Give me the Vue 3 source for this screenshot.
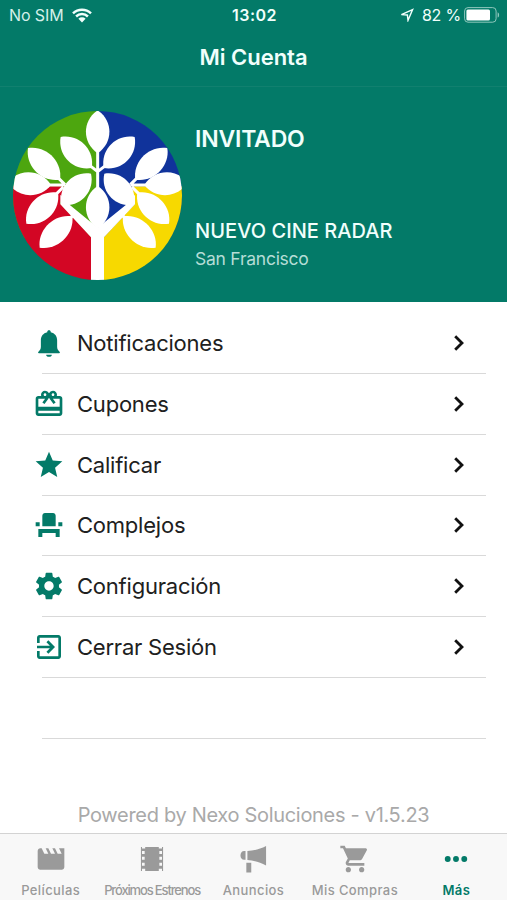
<script setup>
const menuItems = [
  { label: 'Notificaciones', icon: 'bell' },
  { label: 'Cupones', icon: 'gift' },
  { label: 'Calificar', icon: 'star' },
  { label: 'Complejos', icon: 'seat' },
  { label: 'Configuración', icon: 'gear' },
  { label: 'Cerrar Sesión', icon: 'exit' }
]

const icons = {
  bell: 'M9.9 20.9h4.2a2.1 1.5 0 0 1-4.2 0zM12 2.4c-.8 0-1.3.5-1.3 1.2v.3C7.6 4.6 5.9 6.9 5.9 10v4.9c0 1.7-.6 2.6-1.8 3.7-.5.5-.3 1.1.3 1.1h15.2c.6 0 .8-.6.3-1.1-1.2-1.1-1.8-2-1.8-3.7V10c0-3.1-1.7-5.4-4.8-6.1v-.3c0-.7-.5-1.2-1.3-1.2z',
  gift: 'M20 6h-2.18c.11-.31.18-.65.18-1 0-1.66-1.34-3-3-3-1.05 0-1.96.54-2.5 1.35l-.5.67-.5-.68C10.96 2.54 10.05 2 9 2 7.34 2 6 3.34 6 5c0 .35.07.69.18 1H4c-1.11 0-1.99.89-1.99 2L2 19c0 1.11.89 2 2 2h16c1.11 0 2-.89 2-2V8c0-1.11-.89-2-2-2zm-5-2c.55 0 1 .45 1 1s-.45 1-1 1-1-.45-1-1 .45-1 1-1zM9 4c.55 0 1 .45 1 1s-.45 1-1 1-1-.45-1-1 .45-1 1-1zm11 15H4v-2h16v2zm0-5H4V8h5.08L7 10.83 8.62 12 11 8.76l1-1.36 1 1.36L15.38 12 17 10.83 14.92 8H20v6z',
  star: 'M12 17.27 18.18 21l-1.64-7.03L22 9.24l-7.19-.61L12 2 9.19 8.63 2 9.24l5.46 4.73L5.82 21z',
  seat: 'M4 18v3h3v-3h10v3h3v-6H4zm15-8h3v3h-3zM2 10h3v3H2zm15 3H7V5c0-1.1.9-2 2-2h6c1.1 0 2 .9 2 2v8z',
  gear: 'M19.43 12.98c.04-.32.07-.64.07-.98s-.03-.66-.07-.98l2.11-1.65c.19-.15.24-.42.12-.64l-2-3.46c-.12-.22-.39-.3-.61-.22l-2.49 1c-.52-.4-1.08-.73-1.69-.98l-.38-2.65C14.46 2.18 14.25 2 14 2h-4c-.25 0-.46.18-.49.42l-.38 2.65c-.61.25-1.17.59-1.69.98l-2.49-1c-.23-.09-.49 0-.61.22l-2 3.46c-.13.22-.07.49.12.64l2.11 1.65c-.04.32-.07.65-.07.98s.03.66.07.98l-2.11 1.65c-.19.15-.24.42-.12.64l2 3.46c.12.22.39.3.61.22l2.49-1c.52.4 1.08.73 1.69.98l.38 2.65c.03.24.24.42.49.42h4c.25 0 .46-.18.49-.42l.38-2.65c.61-.25 1.17-.59 1.69-.98l2.49 1c.23.09.49 0 .61-.22l2-3.46c.12-.22.07-.49-.12-.64l-2.11-1.65zM12 15.5c-1.93 0-3.5-1.57-3.5-3.5s1.57-3.5 3.5-3.5 3.5 1.57 3.5 3.5-1.57 3.5-3.5 3.5z',
  exit: 'M10.09 15.59 11.5 17l5-5-5-5-1.41 1.41L12.67 11H3v2h9.67l-2.58 2.59zM19 3H5c-1.11 0-2 .9-2 2v4h2V5h14v14H5v-4H3v4c0 1.1.89 2 2 2h14c1.1 0 2-.9 2-2V5c0-1.1-.9-2-2-2z',
  movie: 'M18 4l2 4h-3l-2-4h-2l2 4h-3l-2-4H8l2 4H7L5 4H4c-1.1 0-1.99.9-1.99 2L2 18c0 1.1.9 2 2 2h16c1.1 0 2-.9 2-2V4h-4z',
  film: 'M3.7 3h.8v1.2h2.4V3h10.2v1.2h2.4V3h.8v18h-.8v-1.6h-2.4V21H6.9v-1.6H4.5V21h-.8zM4.5 6v2.2h2V6zm0 4.4v2.2h2v-2.2zm0 4.4V17h2v-2.2zM17.5 6v2.2h2V6zm0 4.4v2.2h2v-2.2zm0 4.4V17h2v-2.2z',
  megaphone: 'M6.4 6v6.6H5.3c-1.6 0-2.7-1.5-2.7-3.3S3.7 6 5.3 6zM7.8 6c5-.3 9.4-1.4 14-3.8v14.6c-4.6-2.5-9-3.7-14-4zM7 14.9h3.7v7.2H7z',
  cart: 'M7 18c-1.1 0-1.99.9-1.99 2S5.9 22 7 22s2-.9 2-2-.9-2-2-2zM1 2v2h2l3.6 7.59-1.35 2.45c-.16.28-.25.61-.25.96 0 1.1.9 2 2 2h12v-2H7.42c-.14 0-.25-.11-.25-.25l.03-.12.9-1.63h7.45c.75 0 1.41-.41 1.75-1.03l3.58-6.49A1 1 0 0 0 20 4H5.21l-.94-2H1zm16 16c-1.1 0-1.99.9-1.99 2s.89 2 1.99 2 2-.9 2-2-.9-2-2-2z',
  dots: 'M5.8 9.8a2.2 2.2 0 1 0 0 4.4 2.2 2.2 0 0 0 0-4.4zm6.2 0a2.2 2.2 0 1 0 0 4.4 2.2 2.2 0 0 0 0-4.4zm6.2 0a2.2 2.2 0 1 0 0 4.4 2.2 2.2 0 0 0 0-4.4z'
}

const tabs = [
  { label: 'Películas', icon: 'movie' },
  { label: 'Próximos Estrenos', icon: 'film', tight: true },
  { label: 'Anuncios', icon: 'megaphone' },
  { label: 'Mis Compras', icon: 'cart' },
  { label: 'Más', icon: 'dots', active: true }
]

// one leaf between two tips, d is how far both sides bulge out
function leaf([x1, y1, x2, y2, d]) {
  const len = Math.hypot(x2 - x1, y2 - y1)
  const ux = (x2 - x1) / len
  const uy = (y2 - y1) / len
  const nx = -uy * d
  const ny = ux * d
  const k = len * 0.24
  const ax = x1 + ux * k
  const ay = y1 + uy * k
  const bx = x2 - ux * k
  const by = y2 - uy * k
  return `M${x1} ${y1}C${ax + nx} ${ay + ny} ${bx + nx} ${by + ny} ${x2} ${y2}` +
    `C${bx - nx} ${by - ny} ${ax - nx} ${ay - ny} ${x1} ${y1}Z`
}

const sideLeaves = [
  [167, 102, 260, 195, 46],
  [69, 135, 165, 230, 45],
  [8, 238, 138, 246, 46],
  [159, 269, 64, 362, 45],
  [202, 340, 104, 434, 44],
  [258, 212, 170, 305, 46]
]
const leaves = [
  [278, 22, 278, 151, 47],
  [278, 249, 278, 377, 47],
  ...sideLeaves,
  ...sideLeaves.map(([x1, y1, x2, y2, d]) => [556 - x1, y1, 556 - x2, y2, d])
].map(leaf)
</script>

<template>
  <div class="screen">
    <header class="header">
      <div class="status">
        <div class="status-left">
          <span class="carrier">No SIM</span>
          <svg class="wifi" viewBox="0 0 20 15">
            <path d="M1 5.3a13 13 0 0 1 18 0M4.1 8.5a8.5 8.5 0 0 1 11.8 0" fill="none" stroke="currentColor" stroke-width="2.5" />
            <path d="M6.4 10.8a5.2 5.2 0 0 1 7.2 0L10 14.4z" fill="currentColor" />
          </svg>
        </div>
        <span class="time">13:02</span>
        <div class="status-right">
          <svg class="location" viewBox="0 0 14 14">
            <path d="M1.4 6.6 12.6 1.6 8 12.4 7.4 7z" fill="none" stroke="currentColor" stroke-width="1.4" />
          </svg>
          <span class="percent">82 %</span>
          <svg class="battery" viewBox="0 0 36 16">
            <rect x=".6" y=".6" width="31.5" height="14.6" rx="3.4" fill="none" stroke="#8fc7bc" stroke-width="1" />
            <rect x="2.4" y="2.4" width="23.6" height="11" rx="1.5" fill="#fff" />
            <path d="M33.6 5.2c2 .6 2 4.8 0 5.4z" fill="#8fc7bc" />
          </svg>
        </div>
      </div>
      <h1 class="title">Mi Cuenta</h1>
      <div class="profile">
        <svg class="logo" viewBox="24 24 507 507">
          <clipPath id="disc"><circle cx="277.5" cy="277.5" r="253.5" /></clipPath>
          <g clip-path="url(#disc)">
            <path d="M24 24h254v380H24z" fill="#4da60f" />
            <path d="M278 24h254v380H278z" fill="#10339b" />
            <path d="M0 250h176l-10 52 92 100v140H0z" fill="#d30624" />
            <path d="M556 250H380l10 52-93 100v140h259z" fill="#f7d900" />
            <path d="M166 275v29l92 99v140h39V403l93-99v-29l-23 27-89 72-88-72z" fill="#fff" />
            <path
              d="M278 140v120M250 184l28 22 28-22M155 220l25 25M401 220l-25 25M120 246h60M436 246h-60M155 272l20-20M401 272l-20-20M198 343l12-12M358 343l-12-12"
              fill="none"
              stroke="#fff"
              stroke-width="9"
            />
            <path v-for="(d, i) in leaves" :key="i" :d="d" fill="#fff" />
          </g>
        </svg>
        <div class="profile-text">
          <strong class="user">INVITADO</strong>
          <div>
            <div class="cinema">NUEVO CINE RADAR</div>
            <div class="city">San Francisco</div>
          </div>
        </div>
      </div>
    </header>

    <main class="content">
      <ul class="menu">
        <li v-for="item in menuItems" :key="item.label" class="menu-item">
          <svg class="menu-icon" viewBox="0 0 24 24">
            <path :d="icons[item.icon]" fill="currentColor" />
          </svg>
          <span class="menu-label">{{ item.label }}</span>
          <svg class="chevron" viewBox="0 0 12 18">
            <path d="M2.2 2.2 9 9l-6.8 6.8" fill="none" stroke="currentColor" stroke-width="2.8" />
          </svg>
        </li>
        <li class="menu-item"></li>
      </ul>
      <p class="powered">Powered by Nexo Soluciones - v1.5.23</p>
    </main>

    <nav class="tabs">
      <a v-for="tab in tabs" :key="tab.label" class="tab" :class="{ active: tab.active, tight: tab.tight }">
        <svg class="tab-icon" viewBox="0 0 24 24">
          <path :d="icons[tab.icon]" fill="currentColor" fill-rule="evenodd" />
        </svg>
        <span>{{ tab.label }}</span>
      </a>
    </nav>
  </div>
</template>

<style>
body {
  margin: 0;
}
</style>

<style scoped>
.screen {
  display: flex;
  flex-direction: column;
  width: 507px;
  height: 900px;
  overflow: hidden;
  background: #fff;
  font-family: Inter, "Liberation Sans", sans-serif;
}

.header {
  height: 302px;
  flex: none;
  background: #037a68;
  color: #f1fffc;
}

.status {
  display: grid;
  grid-template-columns: 1fr auto 1fr;
  align-items: center;
  height: 30px;
  padding: 0 7px 0 9px;
  box-sizing: border-box;
  font-size: 16px;
}

.status-left,
.status-right {
  display: flex;
  align-items: center;
}

.status-right {
  justify-content: flex-end;
}

.carrier {
  color: #d5f0ea;
  letter-spacing: -0.1px;
}

.wifi {
  width: 20px;
  height: 15px;
  margin-left: 8px;
}

.time {
  font-weight: 600;
  letter-spacing: 0.5px;
}

.location {
  width: 14px;
  height: 14px;
  margin-right: 8px;
}

.percent {
  letter-spacing: -0.2px;
}

.battery {
  width: 36px;
  height: 16px;
  margin-left: 3px;
}

.title {
  height: 57px;
  margin: 0;
  box-sizing: border-box;
  border-bottom: 1px solid #11806f;
  font-size: 22px;
  font-weight: 600;
  line-height: 55px;
  text-align: center;
}

.profile {
  display: flex;
  padding: 24px 0 0 13px;
}

.logo {
  width: 169px;
  height: 169px;
}

.profile-text {
  display: flex;
  flex-direction: column;
  justify-content: space-between;
  height: 162px;
  padding: 14px 0 0 13px;
  box-sizing: border-box;
}

.user {
  font-size: 23px;
  font-weight: 600;
  letter-spacing: -0.2px;
  line-height: 28px;
}

.cinema {
  font-size: 20px;
  font-weight: 500;
  letter-spacing: 0.05px;
  line-height: 28px;
}

.city {
  color: #b5ddd6;
  font-size: 17.5px;
  letter-spacing: -0.25px;
  line-height: 28px;
}

.content {
  flex: 1;
}

.menu {
  margin: 0;
  padding: 11.3px 21px 0 42px;
  list-style: none;
}

.menu-item {
  display: flex;
  align-items: center;
  height: 60.75px;
  box-sizing: border-box;
  border-bottom: 1px solid #d9d9d9;
}

.menu-icon {
  width: 32px;
  height: 32px;
  margin-left: -9px;
  color: #037a68;
}

.menu-label {
  flex: 1;
  margin-left: 12px;
  color: #202020;
  font-size: 22px;
  letter-spacing: -0.22px;
}

.chevron {
  width: 12px;
  height: 18px;
  margin-right: 21px;
  color: #111;
}

.powered {
  margin: 62px 0 0;
  color: #a9a9a9;
  font-size: 20px;
  letter-spacing: -0.31px;
  line-height: 28px;
  text-align: center;
}

.tabs {
  display: grid;
  grid-template-columns: repeat(5, 1fr);
  height: 67px;
  flex: none;
  box-sizing: border-box;
  border-top: 1px solid #d3d3d3;
  background: #f8f8f8;
}

.tab {
  display: flex;
  flex-direction: column;
  align-items: center;
  padding-top: 9px;
  color: #9a9a9a;
  font-size: 13px;
  font-weight: 500;
  letter-spacing: 0.4px;
  line-height: 16px;
  white-space: nowrap;
}

.tab-icon {
  width: 32px;
  height: 32px;
  margin-bottom: 7px;
}

.tight {
  letter-spacing: -1.15px;
}

.active {
  color: #037a68;
  font-weight: 600;
}
</style>
